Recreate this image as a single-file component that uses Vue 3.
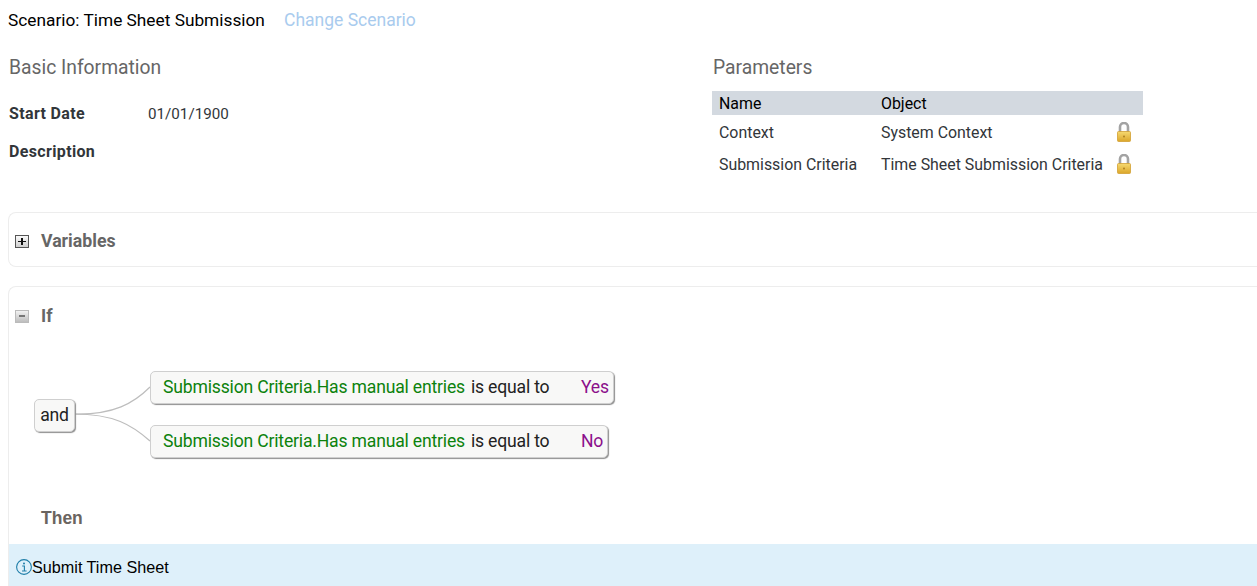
<script setup>
const params = [
  { name: 'Context', object: 'System Context' },
  { name: 'Submission Criteria', object: 'Time Sheet Submission Criteria' }
]
const conditions = [
  { value: 'Yes' },
  { value: 'No' }
]
</script>

<template>
  <div class="page">
    <header class="scenario">
      <span class="scenarioName">Scenario: Time Sheet Submission</span>
      <span class="changeLink">Change Scenario</span>
    </header>

    <section class="info">
      <div class="basic">
        <h2 class="sectionTitle">Basic Information</h2>
        <div class="field startDate">
          <span class="fieldLabel">Start Date</span>
          <span class="fieldValue">01/01/1900</span>
        </div>
        <div class="field description">
          <span class="fieldLabel">Description</span>
        </div>
      </div>
      <div class="parameters">
        <h2 class="sectionTitle">Parameters</h2>
        <div class="paramTable">
          <div class="paramHead">
            <span class="colName">Name</span>
            <span>Object</span>
          </div>
          <div class="paramRow" v-for="p in params" :key="p.name">
            <span class="colName">{{ p.name }}</span>
            <span class="colObject">{{ p.object }}</span>
            <svg class="lock" viewBox="0 0 16 20" width="16" height="20">
              <defs>
                <linearGradient id="lockBody" x1="0" y1="0" x2="0" y2="1">
                  <stop offset="0" stop-color="#f6d970" />
                  <stop offset="1" stop-color="#dba62a" />
                </linearGradient>
              </defs>
              <path d="M4 11V5a4 4 0 0 1 8 0V11" fill="none" stroke="#a3a3a3" stroke-width="2.6" />
              <rect x="1.5" y="9.5" width="13" height="10" rx="1" fill="url(#lockBody)" stroke="#d2a032" stroke-width="0.8" />
              <circle cx="8" cy="14.5" r="0.9" fill="#a87a1c" />
            </svg>
          </div>
        </div>
      </div>
    </section>

    <section class="panel variables">
      <span class="toggle plus"></span>
      <span class="panelTitle">Variables</span>
    </section>

    <section class="panel rule">
      <div class="ruleHead">
        <span class="toggle minus"></span>
        <span class="panelTitle">If</span>
      </div>

      <div class="tree">
        <svg class="connectors" width="80" height="88" viewBox="0 0 80 88" fill="none">
          <path d="M0 43 C 40 44, 60 32, 76 16" stroke="#bdbdbd" stroke-width="1.2" />
          <path d="M0 43 C 40 43, 58 54, 76 70" stroke="#bdbdbd" stroke-width="1.2" />
        </svg>
        <div class="node andNode">and</div>
        <div class="conditions">
          <div class="node condition" v-for="c in conditions" :key="c.value">
            <span class="field1">Submission Criteria.Has manual entries</span>
            <span class="operator">is equal to</span>
            <span class="value">{{ c.value }}</span>
          </div>
        </div>
      </div>

      <div class="thenTitle">Then</div>
      <div class="action">
        <svg class="infoIcon" viewBox="0 0 16 16" width="16" height="16" fill="none">
          <circle cx="8" cy="8" r="7.4" stroke="#1f7ea8" stroke-width="1.1" />
          <circle cx="8" cy="4.4" r="1" fill="#1f7ea8" />
          <path d="M6.2 7h2.2v4.8M6 12h4.6" stroke="#1f7ea8" stroke-width="1.1" />
        </svg>
        <span>Submit Time Sheet</span>
      </div>
    </section>
  </div>
</template>

<style>
html, body {
  margin: 0;
  background: #fff;
  overflow: hidden;
}
</style>

<style scoped>
.page {
  width: 1257px;
  height: 586px;
  overflow: hidden;
  font-family: Roboto, "Noto Sans", sans-serif;
  color: #32363a;
  box-sizing: border-box;
  padding-left: 8px;
}
.scenario {
  display: flex;
  box-sizing: border-box;
  height: 40px;
  padding-bottom: 1px;
  align-items: center;
  font-size: 17.3px;
}
.scenarioName {
  color: #000;
  width: 276px;
}
.changeLink {
  color: #a9cbee;
  font-size: 17.5px;
}
.info {
  display: flex;
  height: 172px;
}
.basic {
  width: 705px;
  padding-left: 1px;
  box-sizing: border-box;
}
.sectionTitle {
  margin: 0;
  padding-top: 16px;
  font-size: 19.3px;
  line-height: 24px;
  font-weight: 400;
  color: #666;
}
.field {
  display: flex;
  font-size: 15.2px;
  line-height: 20px;
}
.startDate {
  margin-top: 24px;
}
.description {
  margin-top: 18px;
}
.fieldLabel {
  width: 139px;
  font-size: 16px;
  font-weight: 700;
  letter-spacing: 0.35px;
  color: #32363a;
}
.parameters {
  width: 431px;
  margin-left: -1px;
}
.parameters .sectionTitle {
  padding-left: 1px;
}
.paramTable {
  margin-top: 11px;
  font-size: 15.9px;
}
.paramHead {
  display: flex;
  align-items: center;
  box-sizing: border-box;
  height: 24px;
  padding-top: 1px;
  background: #d3d9e0;
  color: #000;
}
.paramRow {
  display: flex;
  align-items: center;
  box-sizing: border-box;
  height: 32px;
  padding-top: 2px;
}
.colName {
  width: 169px;
  padding-left: 7px;
  box-sizing: border-box;
  flex: none;
}
.colObject {
  width: 235px;
  white-space: nowrap;
  flex: none;
}
.lock {
  flex: none;
}
.panel {
  border: 1px solid #ededed;
  border-right: none;
  border-radius: 8px 0 0 8px;
}
.variables {
  display: flex;
  align-items: center;
  height: 55px;
  padding-top: 2px;
  box-sizing: border-box;
}
.toggle {
  display: block;
  width: 14px;
  height: 13px;
  margin: 2px 0 0 6px;
  box-sizing: border-box;
  border: 1px solid #555;
  background: linear-gradient(#fafafa, #cfcfcf);
  position: relative;
}
.toggle::before, .plus::after {
  content: "";
  position: absolute;
  background: #111;
}
.toggle::before {
  left: 2px;
  top: 5px;
  width: 8px;
  height: 1px;
}
.plus::after {
  left: 5px;
  top: 2px;
  width: 2px;
  height: 7px;
}
.minus {
  border-color: #bbb;
  background: linear-gradient(#f2f2f2, #bdbdbd);
}
.minus::before {
  background: #777;
  left: 3px;
  top: 4px;
  width: 6px;
  height: 2px;
}
.panelTitle {
  margin-left: 12px;
  font-size: 17.7px;
  font-weight: 700;
  color: #666;
}
.rule {
  margin-top: 19px;
  height: 320px;
  border-bottom: none;
  border-radius: 8px 0 0 0;
}
.ruleHead {
  display: flex;
  align-items: center;
  height: 57px;
}
.tree {
  display: flex;
  align-items: center;
  gap: 75px;
  margin: 27px 0 0 25px;
  position: relative;
}
.connectors {
  position: absolute;
  left: 40px;
  top: 0;
}
.node {
  box-sizing: border-box;
  background: #f8f8f7;
  border: 1px solid #cfcfcf;
  border-radius: 5px;
  box-shadow: 1px 1px 1px #8f8f8f;
  font-size: 17.6px;
  letter-spacing: -0.19px;
  color: #222;
}
.andNode {
  height: 33px;
  width: 41px;
  margin-top: 2px;
  line-height: 30px;
  text-align: center;
  position: relative;
}
.conditions {
  display: flex;
  flex-direction: column;
  gap: 21px;
  position: relative;
}
.condition {
  display: flex;
  align-items: center;
  height: 33px;
  padding: 0 4px 1px 12px;
  white-space: nowrap;
  width: fit-content;
}
.field1 {
  color: #0c820c;
}
.operator {
  margin-left: 6px;
  width: 110px;
}
.value {
  color: #8b0f8b;
}
.thenTitle {
  margin: 47px 0 0 32px;
  height: 26px;
  line-height: 26px;
  font-family: "Liberation Sans", Arial, sans-serif;
  font-size: 17.5px;
  font-weight: 700;
  color: #6a6460;
}
.action {
  margin-top: 13px;
  height: 43px;
  display: flex;
  align-items: center;
  box-sizing: border-box;
  padding: 3px 0 0 7px;
  background: #def0fa;
  font-family: "Liberation Sans", Arial, sans-serif;
  font-size: 16.2px;
  color: #000;
}
</style>
